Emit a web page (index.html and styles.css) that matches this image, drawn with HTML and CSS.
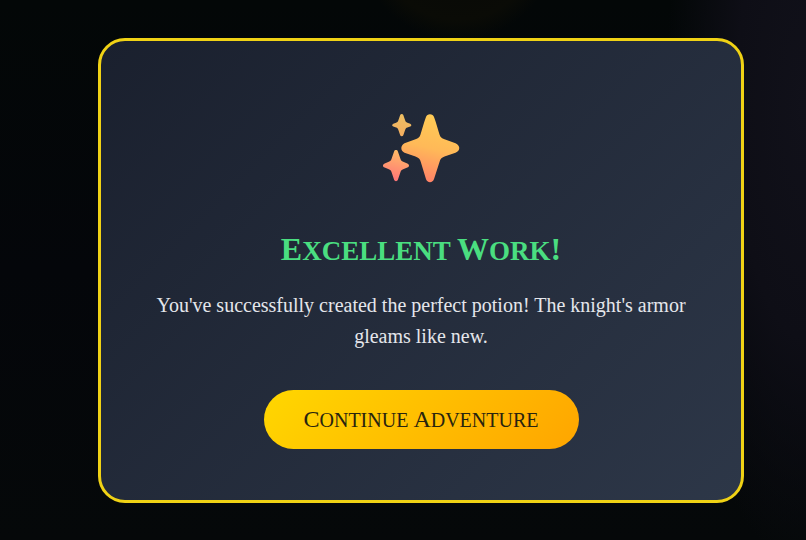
FILE: index.html
```html
<!DOCTYPE html>
<html lang="en">
<head>
<meta charset="utf-8">
<meta name="viewport" content="width=device-width, initial-scale=1">
<title>Excellent Work!</title>
<link rel="stylesheet" href="styles.css">
</head>
<body>
<main class="overlay">
  <section class="card" role="dialog" aria-labelledby="result-title">
    <svg class="sparkles" viewBox="0 0 80 72" aria-hidden="true">
      <defs>
        <linearGradient id="big" x1="0.6" y1="0" x2="0.4" y2="1">
          <stop offset="0" stop-color="#ffcc55"/>
          <stop offset="0.5" stop-color="#ffb958"/>
          <stop offset="1" stop-color="#ff8068"/>
        </linearGradient>
        <linearGradient id="low" x1="0.6" y1="0" x2="0.4" y2="1">
          <stop offset="0" stop-color="#ffbd66"/>
          <stop offset="1" stop-color="#ff7378"/>
        </linearGradient>
        <linearGradient id="top" x1="0.6" y1="0" x2="0.4" y2="1">
          <stop offset="0" stop-color="#edbf62"/>
          <stop offset="1" stop-color="#f4ae60"/>
        </linearGradient>
      </defs>
      <path fill="url(#big)" d="M44.800 5.500C46 1.200 52 1.200 53.200 5.500C55 10.500 57 17.500 58.500 22.500C59.200 25 60.800 26.300 63.500 27.200L74.500 31.300C79.500 33.600 79.500 38.600 74.500 40.800L63.500 44.600C60.500 45.700 59.200 47 58.500 50L53.200 66.500C51.800 71.500 46.200 71.500 44.800 66.500L39.800 50C39.100 47 37.500 45.700 34.500 44.600L23.500 40.800C19.300 38.600 19.300 33.600 23.500 31.300L34.500 27.200C37.200 26.300 38.800 25 39.500 22.500C41 17.500 43 10.500 44.800 5.500Z"/>
      <path fill="url(#top)" d="M19.200 3C19.700 1.600 21.800 1.600 22.300 3L24.200 8.500C24.600 9.700 25.200 10.300 26.400 10.700L29.200 11.700C30.700 12.400 30.700 13.800 29.200 14.500L26.400 15.500C25.200 15.900 24.600 16.500 24.200 17.700L22.300 23.200C21.800 24.600 19.700 24.600 19.200 23.200L17.300 17.700C16.900 16.500 16.300 15.900 15.100 15.500L12.300 14.500C10.800 13.800 10.800 12.400 12.300 11.700L15.100 10.700C16.300 10.300 16.900 9.700 17.300 8.500Z"/>
      <path fill="url(#low)" d="M13.100 39.400C13.600 37.600 16.400 37.600 16.900 39.400L19.500 47C20 48.500 20.700 49.200 22.200 49.800L26.300 51.400C28.600 52.400 28.600 54.700 26.300 55.600L22.200 57.200C20.700 57.800 20 58.500 19.500 60L16.900 67.800C16.400 69.600 13.600 69.600 13.100 67.800L10.500 60C10 58.500 9.300 57.800 7.800 57.200L3.700 55.600C1.400 54.700 1.400 52.400 3.700 51.400L7.800 49.800C9.300 49.200 10 48.500 10.500 47Z"/>
    </svg>
    <h1 class="title" id="result-title"><span class="initial">E</span>xcellent <span class="initial">W</span>ork<span class="initial">!</span></h1>
    <p class="message">You've successfully created the perfect potion! The knight's armor gleams like new.</p>
    <button class="continue" type="button"><span class="initial">C</span>ontinue <span class="initial">A</span>dventure</button>
  </section>
</main>
</body>
</html>
```
FILE: styles.css
```css
* {
  box-sizing: border-box;
}

body {
  margin: 0;
  background: #040609;
  font-family: "Liberation Serif", serif;
}

.overlay {
  display: flex;
  align-items: center;
  justify-content: center;
  min-height: 100vh;
  padding: 32px 62px 32px 98px;
  background:
    radial-gradient(circle at 458px -60px, #060806, #0a0b06 80px, transparent 100px),
    radial-gradient(ellipse 140px 460px at 100% 20%, #11111a, #0e0e16 50%, transparent),
    linear-gradient(180deg, #030707, #04060a 50%, #050809);
}

.card {
  display: flex;
  flex-direction: column;
  align-items: center;
  width: 100%;
  max-width: 646px;
  padding: 71px 48px 51px;
  border: 3px solid #f0d215;
  border-radius: 27px;
  background: linear-gradient(135deg, #1a202e, #2d3748);
  text-align: center;
}

.sparkles {
  width: 80px;
  height: 72px;
}

.title {
  margin: 47px 0 0;
  color: #4ade80;
  font-size: 27px;
  line-height: 36px;
  font-weight: 700;
  text-transform: uppercase;
}

.title .initial {
  font-size: 32px;
}

.message {
  margin: 21px 0 0;
  color: #e4e6eb;
  font-size: 20px;
  line-height: 31px;
}

.continue {
  margin: 38px 0 0;
  padding: 14px 40px;
  border: 0;
  border-radius: 30px;
  background: linear-gradient(135deg, #ffd700, #ffa500);
  color: #28240f;
  font-family: inherit;
  font-size: 20px;
  line-height: 30px;
  text-transform: uppercase;
  cursor: pointer;
}

.continue .initial {
  font-size: 24px;
}
```
